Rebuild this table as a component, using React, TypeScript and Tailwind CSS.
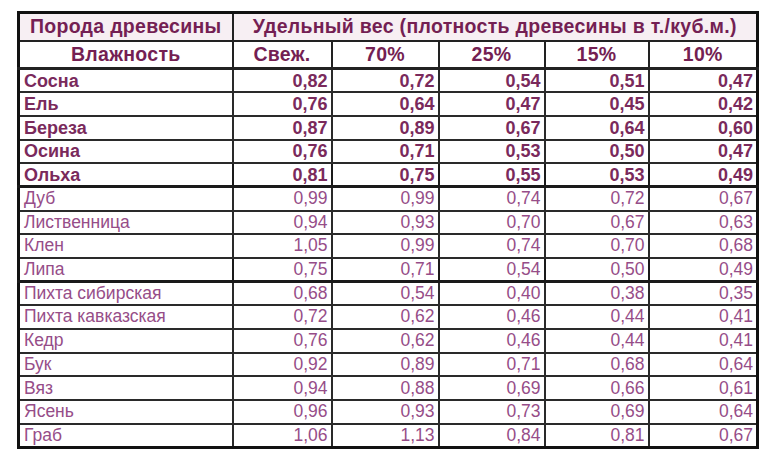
const rows: [string, string[]][] = [
  ['Сосна', ['0,82', '0,72', '0,54', '0,51', '0,47']],
  ['Ель', ['0,76', '0,64', '0,47', '0,45', '0,42']],
  ['Береза', ['0,87', '0,89', '0,67', '0,64', '0,60']],
  ['Осина', ['0,76', '0,71', '0,53', '0,50', '0,47']],
  ['Ольха', ['0,81', '0,75', '0,55', '0,53', '0,49']],
  ['Дуб', ['0,99', '0,99', '0,74', '0,72', '0,67']],
  ['Лиственница', ['0,94', '0,93', '0,70', '0,67', '0,63']],
  ['Клен', ['1,05', '0,99', '0,74', '0,70', '0,68']],
  ['Липа', ['0,75', '0,71', '0,54', '0,50', '0,49']],
  ['Пихта сибирская', ['0,68', '0,54', '0,40', '0,38', '0,35']],
  ['Пихта кавказская', ['0,72', '0,62', '0,46', '0,44', '0,41']],
  ['Кедр', ['0,76', '0,62', '0,46', '0,44', '0,41']],
  ['Бук', ['0,92', '0,89', '0,71', '0,68', '0,64']],
  ['Вяз', ['0,94', '0,88', '0,69', '0,66', '0,61']],
  ['Ясень', ['0,96', '0,93', '0,73', '0,69', '0,64']],
  ['Граб', ['1,06', '1,13', '0,84', '0,81', '0,67']],
]

const thickAfter = [4, 8]

export default function App() {
  return (
    <div className="w-[768px] h-[453px] bg-white pt-[11px] pl-[17px] font-['Liberation_Sans',Arial,sans-serif]">
      <table className="border-collapse border-[3px] border-[#111] table-fixed w-[739px]">
        <colgroup>
          <col className="w-[214px]" />
          <col className="w-[99px]" />
          <col className="w-[107px]" />
          <col className="w-[106px]" />
          <col className="w-[104px]" />
          <col className="w-[109px]" />
        </colgroup>
        <thead>
          <tr className="h-[28px] bg-[#f7eff3] text-[#741f53] font-bold text-[19.5px] tracking-[0.3px] leading-none">
            <th className="border-2 border-[#222] text-center whitespace-nowrap">Порода древесины</th>
            <th colSpan={5} className="border-2 border-[#222] text-center whitespace-nowrap">
              Удельный вес (плотность древесины в т./куб.м.)
            </th>
          </tr>
          <tr className="h-[28px] text-[#741f53] font-bold text-[19.5px] tracking-[0.3px] leading-none">
            <th className="border-2 border-b-[3px] border-[#222] text-center">Влажность</th>
            <th className="border-2 border-b-[3px] border-[#222] text-center">Свеж.</th>
            <th className="border-2 border-b-[3px] border-[#222] text-center">70%</th>
            <th className="border-2 border-b-[3px] border-[#222] text-center">25%</th>
            <th className="border-2 border-b-[3px] border-[#222] text-center">15%</th>
            <th className="border-2 border-b-[3px] border-[#222] text-center">10%</th>
          </tr>
        </thead>
        <tbody>
          {rows.map(([name, vals], i) => {
            const bold = i < 5
            const thick = thickAfter.includes(i)
            const cell = thick ? 'border-2 border-b-[3px] border-[#1a1a1a]' : 'border-2 border-[#2a2a2a]'
            return (
              <tr
                key={name}
                className={
                  'h-[23.7px] leading-none ' +
                  (bold ? 'font-bold text-[#7a2a5c] text-[18px]' : 'text-[#964d88] text-[17.5px]')
                }
              >
                <td className={cell + ' text-left pl-[4px] whitespace-nowrap'}>{name}</td>
                {vals.map((v, j) => (
                  <td key={j} className={cell + ' text-right pr-[3px]'}>
                    {v}
                  </td>
                ))}
              </tr>
            )
          })}
        </tbody>
      </table>
    </div>
  )
}
